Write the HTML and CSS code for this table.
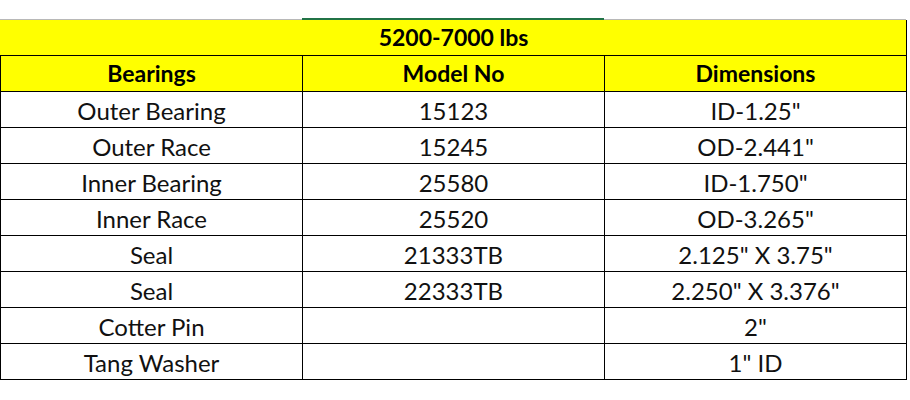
FILE: index.html
```html
<!DOCTYPE html>
<html>
<head>
<meta charset="utf-8">
<link rel="stylesheet" href="styles.css">
</head>
<body>
<div class="sheet">
  <div class="topline">
    <div class="seg gray"></div>
    <div class="seg green"></div>
    <div class="seg gray"></div>
  </div>
  <table class="parts">
    <colgroup><col class="c1"><col class="c2"><col class="c3"></colgroup>
    <tr class="title"><th colspan="3">5200-7000 lbs</th></tr>
    <tr class="head"><th>Bearings</th><th>Model No</th><th>Dimensions</th></tr>
    <tr><td>Outer Bearing</td><td>15123</td><td>ID-1.25"</td></tr>
    <tr><td>Outer Race</td><td>15245</td><td>OD-2.441"</td></tr>
    <tr><td>Inner Bearing</td><td>25580</td><td>ID-1.750"</td></tr>
    <tr><td>Inner Race</td><td>25520</td><td>OD-3.265"</td></tr>
    <tr><td>Seal</td><td>21333TB</td><td>2.125" X 3.75"</td></tr>
    <tr><td>Seal</td><td>22333TB</td><td>2.250" X 3.376"</td></tr>
    <tr><td>Cotter Pin</td><td></td><td>2"</td></tr>
    <tr><td>Tang Washer</td><td></td><td>1" ID</td></tr>
  </table>
</div>
</body>
</html>
```
FILE: styles.css
```css
html, body {
  margin: 0;
  padding: 0;
  background: #ffffff;
}
.sheet {
  padding-top: 18px;
  width: 906px;
}
.topline {
  display: flex;
  align-items: flex-end;
  height: 2px;
}
.seg.gray {
  width: 302px;
  height: 1px;
  background: #b8b8b8;
}
.seg.green {
  width: 302px;
  height: 2px;
  background: #217346;
}
.parts {
  border-collapse: collapse;
  table-layout: fixed;
  width: 906px;
  font-family: Lato, "Open Sans", sans-serif;
  font-size: 24px;
  color: #111;
}
.c1 { width: 302px; }
.c2 { width: 302px; }
.c3 { width: 302px; }
.parts td, .parts th {
  height: 35px;
  padding: 0;
  text-align: center;
  vertical-align: middle;
  border: 1px solid #000;
  line-height: 35px;
}
.parts th {
  font-weight: bold;
  font-size: 23px;
  color: #000;
  background: #ffff00;
}
.title th {
  border-top: none;
  border-left: 1px solid #ffff00;
}
.parts td {
  padding-top: 2px;
  height: 33px;
  line-height: 33px;
}
```
